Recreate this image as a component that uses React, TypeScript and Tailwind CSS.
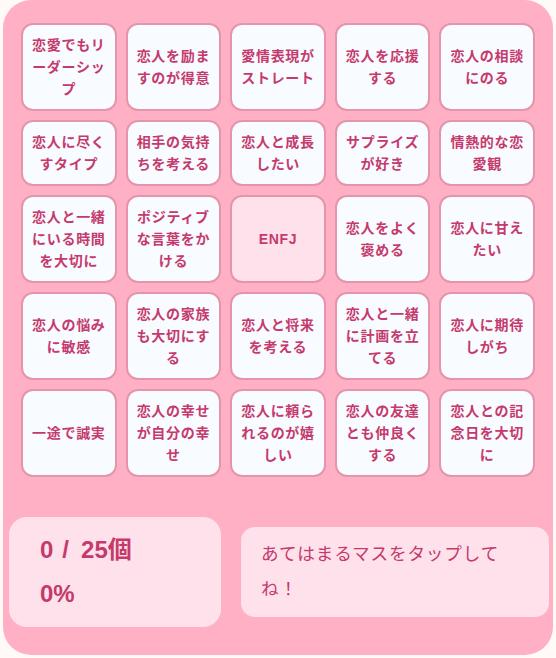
import React from "react";

const cells: string[] = [
  "恋愛でもリーダーシップ",
  "恋人を励ますのが得意",
  "愛情表現がストレート",
  "恋人を応援する",
  "恋人の相談にのる",
  "恋人に尽くすタイプ",
  "相手の気持ちを考える",
  "恋人と成長したい",
  "サプライズが好き",
  "情熱的な恋愛観",
  "恋人と一緒にいる時間を大切に",
  "ポジティブな言葉をかける",
  "ENFJ",
  "恋人をよく褒める",
  "恋人に甘えたい",
  "恋人の悩みに敏感",
  "恋人の家族も大切にする",
  "恋人と将来を考える",
  "恋人と一緒に計画を立てる",
  "恋人に期待しがち",
  "一途で誠実",
  "恋人の幸せが自分の幸せ",
  "恋人に頼られるのが嬉しい",
  "恋人の友達とも仲良くする",
  "恋人との記念日を大切に",
];

export default function App() {
  return (
    <div
      className="min-h-screen bg-[#fffaf8]"
      style={{ fontFamily: '"Liberation Sans", "Noto Sans CJK JP", sans-serif' }}
    >
      <div className="ml-[3px] w-[550px] rounded-[28px] bg-[#ffb0c4] pt-[23px] pb-[28px]">
        <div className="mx-[18px] grid grid-cols-5 gap-[9px]">
          {cells.map((c, i) => (
            <div
              key={i}
              className={`flex items-center justify-center rounded-[12px] border-2 border-[#e595ab] px-[8px] py-[9px] text-center text-[14px] font-bold leading-[22px] tracking-[0.05em] text-[#c53a6c] ${
                c === "ENFJ" ? "bg-[#ffe1ec]" : "bg-[#f8fbff]"
              }`}
            >
              {c}
            </div>
          ))}
        </div>
        <div className="mt-[40px] flex items-center gap-[20px] pl-[6px] pr-[4px]">
          <div className="flex h-[110px] w-[212px] shrink-0 flex-col justify-center rounded-[18px] bg-[#ffe1ec] pl-[31px] text-[24px] font-bold text-[#c43a6b]">
            <div className="flex h-[44px] items-center">
              <span>0</span>
              <span className="ml-[9px]">/</span>
              <span className="ml-[12px]">25個</span>
            </div>
            <div className="flex h-[44px] items-center">0%</div>
          </div>
          <div className="flex-1 rounded-[14px] bg-[#ffe1ec] py-[10px] pl-[20px] pr-[20px] text-[17.6px] leading-[35px] tracking-[0.05em] text-[#c43a6b]">
            あてはまるマスをタップしてね！
          </div>
        </div>
      </div>
    </div>
  );
}
